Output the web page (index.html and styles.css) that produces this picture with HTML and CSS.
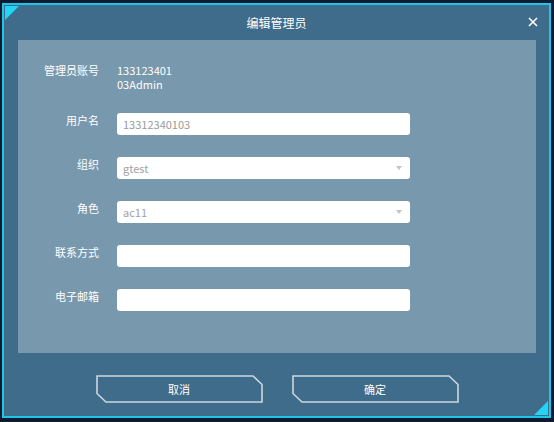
FILE: index.html
```html
<!DOCTYPE html>
<html lang="zh-CN">
<head>
    <meta charset="UTF-8">
    <meta name="viewport" content="width=device-width, initial-scale=1.0">
    <title>编辑管理员</title>
    <link rel="stylesheet" href="styles.css">
</head>
<body>
    <div class="dialog">
        <span class="corner corner-tl"></span>
        <span class="corner corner-br"></span>

        <div class="dialog-header">
            <h3 class="dialog-title">编辑管理员</h3>
            <button class="close-btn" aria-label="关闭">
                <svg width="10" height="10" viewBox="0 0 10 10">
                    <path d="M1.5 1.5 L8.5 8.5 M8.5 1.5 L1.5 8.5" stroke="#fff" stroke-width="1.5" stroke-linecap="square"/>
                </svg>
            </button>
        </div>

        <div class="dialog-body">
            <div class="form-row">
                <label class="form-label">管理员账号</label>
                <div class="form-value">13312340103Admin</div>
            </div>
            <div class="form-row">
                <label class="form-label">用户名</label>
                <input class="text-input" type="text" value="13312340103" readonly>
            </div>
            <div class="form-row">
                <label class="form-label">组织</label>
                <div class="select-box">gtest</div>
            </div>
            <div class="form-row">
                <label class="form-label">角色</label>
                <div class="select-box">ac11</div>
            </div>
            <div class="form-row">
                <label class="form-label">联系方式</label>
                <input class="text-input" type="text">
            </div>
            <div class="form-row">
                <label class="form-label">电子邮箱</label>
                <input class="text-input" type="text">
            </div>
        </div>

        <div class="dialog-footer">
            <button class="frame-btn">
                <svg class="frame-btn-bg" width="167" height="28" viewBox="0 0 167 28">
                    <polygon points="1,1 157,1 166,9.5 166,27 10,27 1,18.5" fill="none" stroke="#cbd7df" stroke-width="1.6"/>
                </svg>
                <span>取消</span>
            </button>
            <button class="frame-btn">
                <svg class="frame-btn-bg" width="167" height="28" viewBox="0 0 167 28">
                    <polygon points="1,1 157,1 166,9.5 166,27 10,27 1,18.5" fill="none" stroke="#cbd7df" stroke-width="1.6"/>
                </svg>
                <span>确定</span>
            </button>
        </div>
    </div>
</body>
</html>
```

FILE: styles.css
```css
body {
    margin: 0;
    background: #0e1a2f;
    font-family: "Noto Sans CJK SC", sans-serif;
    font-size: 11px;
    color: #fff;
}
.dialog {
    position: relative;
    box-sizing: border-box;
    width: 549px;
    height: 415px;
    margin: 3px 0 0 2px;
    border: 2px solid #1dc6e6;
    background: #3f6c8a;
}
.corner {
    position: absolute;
    width: 14px;
    height: 14px;
    background: #22d4f6;
}
.corner-tl {
    top: 1px;
    left: 1px;
    clip-path: polygon(0 0, 100% 0, 0 100%);
}
.corner-br {
    right: 1px;
    bottom: 1px;
    clip-path: polygon(100% 0, 100% 100%, 0 100%);
}
.dialog-header {
    position: relative;
    height: 35px;
    display: flex;
    align-items: center;
    justify-content: center;
}
.dialog-title {
    margin: 0;
    font-size: 12px;
    font-weight: normal;
    line-height: 16px;
    padding-top: 1px;
}
.close-btn {
    position: absolute;
    right: 11px;
    top: 12px;
    padding: 0;
    border: none;
    background: none;
    cursor: pointer;
    line-height: 0;
}
.dialog-body {
    margin: 0 13px 0 14px;
    height: 313px;
    box-sizing: border-box;
    padding-top: 23px;
    background: #7898ad;
    display: flex;
    flex-direction: column;
    gap: 22px;
}
.form-row {
    display: flex;
    align-items: flex-start;
    gap: 18px;
}
.form-label {
    width: 81px;
    flex-shrink: 0;
    text-align: right;
    line-height: 14px;
}
.form-value {
    width: 57px;
    line-height: 14px;
    word-break: break-all;
}
.text-input,
.select-box {
    box-sizing: border-box;
    width: 293px;
    height: 22px;
    margin: 0;
    padding: 0 6px;
    border: none;
    border-radius: 3px;
    background: #fff;
    font-family: inherit;
    font-size: 11px;
    color: #9a9a9a;
    outline: none;
}
.select-box {
    position: relative;
    line-height: 22px;
    color: #a2a2a2;
}
.select-box::after {
    content: "";
    position: absolute;
    right: 8px;
    top: 9px;
    border-left: 3.5px solid transparent;
    border-right: 3.5px solid transparent;
    border-top: 4px solid #c4c4c4;
}
.dialog-footer {
    display: flex;
    justify-content: center;
    gap: 29px;
    padding-top: 22px;
    padding-left: 1px;
}
.frame-btn {
    position: relative;
    width: 167px;
    height: 28px;
    padding: 0;
    border: none;
    background: none;
    font-family: inherit;
    font-size: 11px;
    color: #fff;
    cursor: pointer;
}
.frame-btn-bg {
    position: absolute;
    left: 0;
    top: 0;
}
.frame-btn span {
    position: relative;
}
```
